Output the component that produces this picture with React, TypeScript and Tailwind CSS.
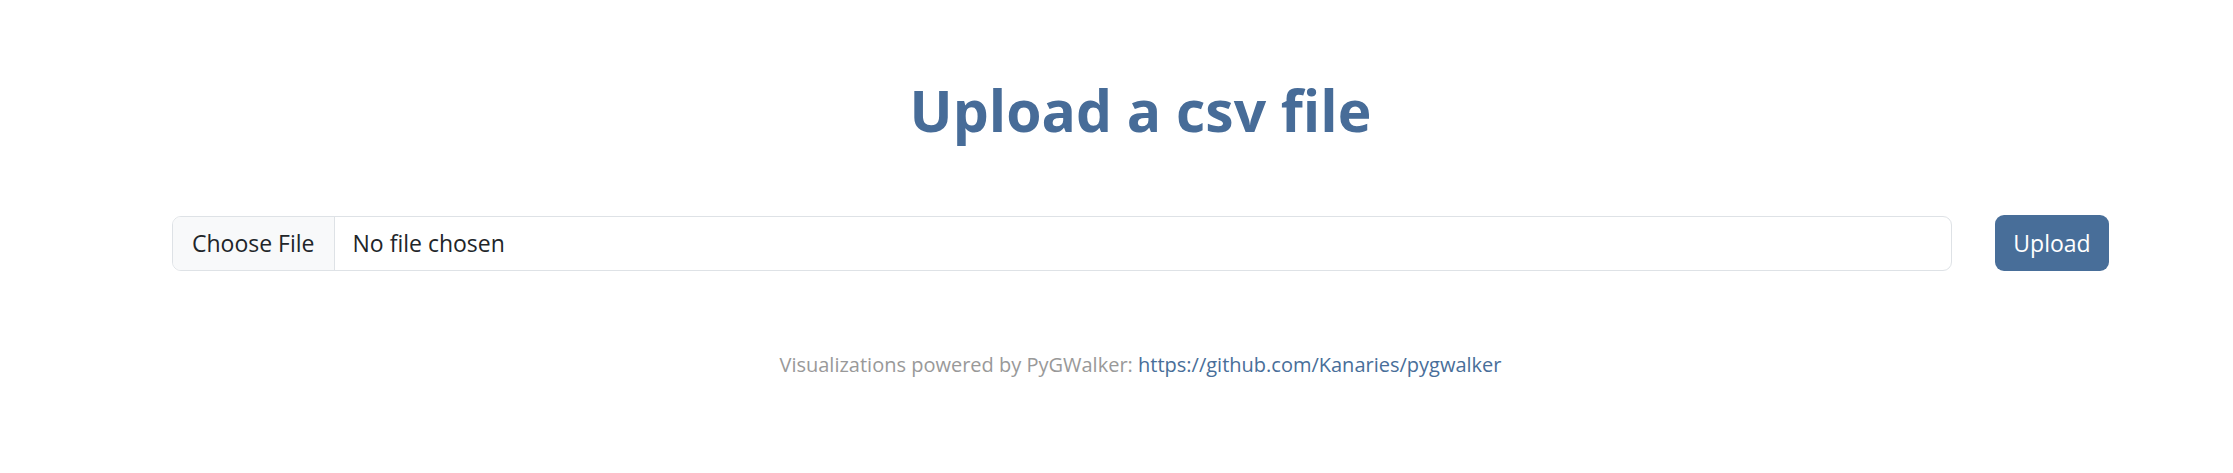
import React from "react";

const App = () => {
  return (
    <div className="w-full h-[473px] bg-white font-['Open_Sans',sans-serif] text-[#212529]">
      <div className="pl-[172px] pr-[124px] pt-[74px]">
        {/* Heading */}
        <h1 className="text-center text-[57px] leading-[72px] font-bold text-[#476c98]">
          Upload a csv file
        </h1>

        {/* Upload form */}
        <form className="flex items-center gap-[43px] mt-[69px]" onSubmit={(e) => e.preventDefault()}>
          <label className="flex flex-1 h-[55px] border border-[#dee2e6] rounded-[9px] overflow-hidden text-[23px] cursor-pointer">
            <span className="flex items-center px-[19px] bg-[#f8f9fa] border-r border-[#dee2e6]">
              Choose File
            </span>
            <span className="flex items-center px-[18px]">No file chosen</span>
            <input type="file" className="hidden" />
          </label>
          <button
            type="submit"
            className="w-[114px] h-[56px] rounded-[9px] bg-[#486e99] text-white text-[23px]"
          >
            Upload
          </button>
        </form>

        {/* Footer */}
        <p className="mt-[79px] text-center text-[20px] leading-[30px] text-[#999999]">
          Visualizations powered by PyGWalker:{" "}
          <a href="#" className="text-[#486e99]">
            https://github.com/Kanaries/pygwalker
          </a>
        </p>
      </div>
    </div>
  );
};

export default App;
